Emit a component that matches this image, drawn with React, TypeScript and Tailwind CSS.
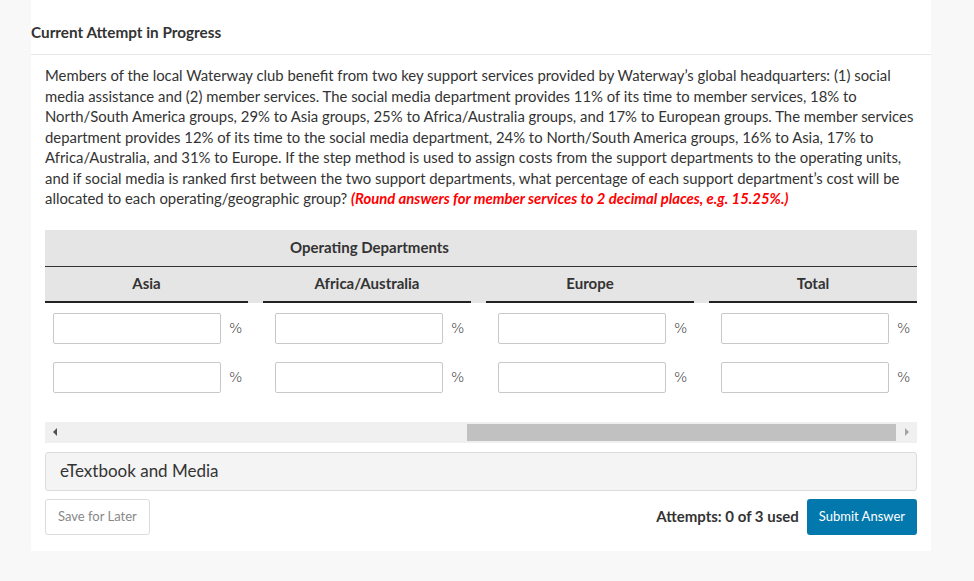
const columns = ['Asia', 'Africa/Australia', 'Europe', 'Total'];

function PercentInput({ first }: { first?: boolean }) {
  return (
    <div className={`flex items-center ${first ? 'pl-[8px]' : 'pl-[12px]'}`}>
      <input
        type="text"
        className="h-[31px] w-[168px] rounded-[2px] border border-[#c8c8c8] bg-white outline-none"
      />
      <span className="ml-[8px] text-[14px] text-[#333] font-['DejaVu_Sans',sans-serif] font-light">%</span>
    </div>
  );
}

export default function App() {
  return (
    <div className="min-h-screen bg-[#f8f8f8] font-['Lato',sans-serif] text-[#333]">
      <div className="ml-[31px] w-[900px] bg-white pb-[16px]">
        <div className="border-b border-[#e8e8e8] pt-[23px] pb-[12px] text-[15.3px] font-bold leading-[19px]">
          Current Attempt in Progress
        </div>

        <div className="px-[14px]">
          <p className="mt-[10px] whitespace-nowrap text-[14.87px] leading-[20.5px]">
            Members of the local Waterway club benefit from two key support services provided by Waterway’s global headquarters: (1) social
            <br />
            media assistance and (2) member services. The social media department provides 11% of its time to member services, 18% to
            <br />
            North/South America groups, 29% to Asia groups, 25% to Africa/Australia groups, and 17% to European groups. The member services
            <br />
            department provides 12% of its time to the social media department, 24% to North/South America groups, 16% to Asia, 17% to
            <br />
            Africa/Australia, and 31% to Europe. If the step method is used to assign costs from the support departments to the operating units,
            <br />
            and if social media is ranked first between the two support departments, what percentage of each support department’s cost will be
            <br />
            allocated to each operating/geographic group?{' '}
            <span className="font-bold italic text-[#f00]">
              (Round answers for member services to 2 decimal places, e.g. 15.25%.)
            </span>
          </p>

          <div className="mt-[21px] bg-[#e5e5e5]">
            <div className="grid grid-cols-[203px_1fr_1fr_1fr] gap-x-[15px] border-b border-[#333]">
              <div className="col-span-3 flex h-[36px] items-center justify-center text-[15px] font-bold">
                Operating Departments
              </div>
              <div />
            </div>
            <div className="grid grid-cols-[203px_1fr_1fr_1fr] gap-x-[15px]">
              {columns.map((c) => (
                <div
                  key={c}
                  className="flex h-[36px] items-center justify-center border-b-2 border-[#222] text-[15px] font-bold"
                >
                  {c}
                </div>
              ))}
            </div>
          </div>

          <div className="grid grid-cols-[203px_1fr_1fr_1fr] gap-x-[15px] gap-y-[18px] pt-[10px]">
            {[0, 1].map((r) =>
              columns.map((c, i) => <PercentInput key={`${r}-${c}`} first={i === 0} />)
            )}
          </div>

          <div className="mt-[29px] flex h-[21px] items-center bg-[#f0f0f0]">
            <div className="flex w-[20px] items-center justify-center">
              <div className="h-0 w-0 border-y-[4px] border-r-[4px] border-y-transparent border-r-[#505050]" />
            </div>
            <div className="ml-[402px] h-[17px] w-[429px] bg-[#c1c1c1]" />
            <div className="flex flex-1 items-center justify-center">
              <div className="h-0 w-0 border-y-[4px] border-l-[4px] border-y-transparent border-l-[#a3a3a3]" />
            </div>
          </div>

          <div className="mt-[9px] flex h-[39px] items-center rounded-[3px] border border-[#dcdcdc] bg-[#f4f4f4] pl-[14px] text-[17px]">
            eTextbook and Media
          </div>

          <div className="mt-[8px] flex items-center justify-between">
            <button className="h-[36px] rounded-[3px] border border-[#dcdcdc] bg-white px-[12px] text-[13px] text-[#888]">
              Save for Later
            </button>
            <div className="flex items-center">
              <span className="text-[15px] font-bold text-[#333]">Attempts: 0 of 3 used</span>
              <button className="ml-[8px] h-[36px] rounded-[3px] bg-[#0278ad] px-[12px] text-[13px] text-white">
                Submit Answer
              </button>
            </div>
          </div>
        </div>
      </div>
    </div>
  );
}
